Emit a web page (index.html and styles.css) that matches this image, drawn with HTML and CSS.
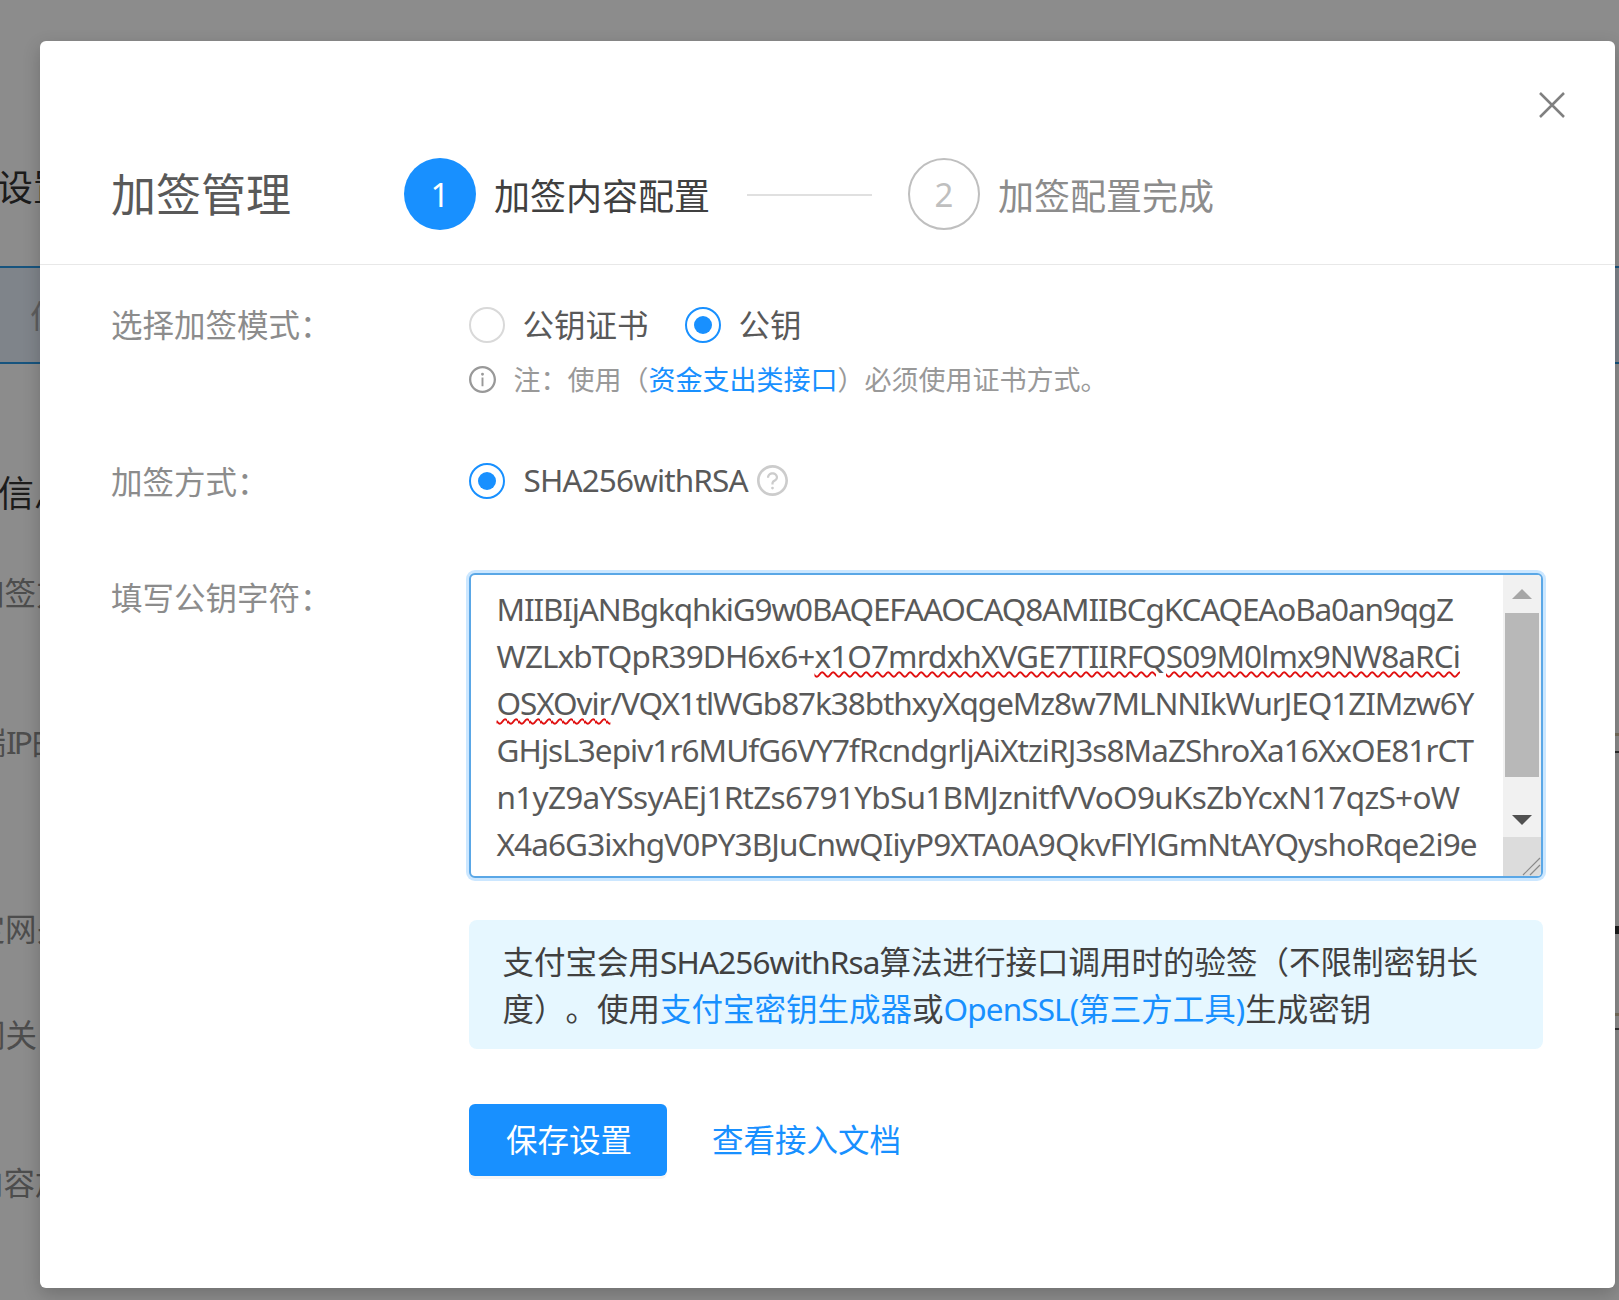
FILE: index.html
```html
<!DOCTYPE html>
<html lang="zh-CN">
<head>
<meta charset="utf-8">
<title>加签管理</title>
<link rel="stylesheet" href="styles.css">
</head>
<body>
<div class="page">
  <div class="bg-row bg-heading bg-r1"><span class="off-a">设置</span></div>
  <div class="bg-band"><span class="band-tab">位</span><span class="band-end"></span></div>
  <div class="bg-row bg-heading bg-r2"><span class="off-b">信息</span></div>
  <div class="bg-row bg-r3"><span class="off-c">加签方式</span></div>
  <div class="bg-row bg-r4"><span class="off-d">端<span class="ip">IP</span>白名单</span><i class="mark mark-a"></i></div>
  <div class="bg-row bg-r5"><span class="off-e">绑定网关</span><i class="mark mark-b"></i></div>
  <div class="bg-row bg-r6"><span class="off-f">网关：</span><i class="mark mark-c"></i></div>
  <div class="bg-row bg-r7"><span class="off-g">内容加密</span></div>

  <div class="overlay">
    <div class="modal">
      <button class="close" aria-label="关闭">
        <svg viewBox="0 0 26 26" width="26" height="26"><path d="M1 1L25 25M25 1L1 25" fill="none" stroke="#808080" stroke-width="2.5"/></svg>
      </button>
      <header class="modal-head">
        <h1 class="modal-title">加签管理</h1>
        <div class="step step-on"><span class="step-num">1</span><span class="step-text">加签内容配置</span></div>
        <span class="step-line"></span>
        <div class="step step-off"><span class="step-num">2</span><span class="step-text">加签配置完成</span></div>
      </header>
      <div class="form">
        <div class="label">选择加签模式：</div>
        <div class="control">
          <div class="radios">
            <label class="radio"><i class="dot"></i>公钥证书</label>
            <label class="radio"><i class="dot dot-on"></i>公钥</label>
          </div>
          <p class="note">
            <svg class="note-icon" viewBox="64 64 896 896" width="27" height="27"><path fill="#999" d="M512 64C264.6 64 64 264.6 64 512s200.6 448 448 448 448-200.6 448-448S759.4 64 512 64zm0 820c-205.4 0-372-166.6-372-372s166.6-372 372-372 372 166.6 372 372-166.6 372-372 372z"/><path fill="#999" d="M464 336a48 48 0 1 0 96 0 48 48 0 1 0-96 0zm72 112h-48c-4.400 0-8 3.600-8 8v272c0 4.400 3.600 8 8 8h48c4.400 0 8-3.600 8-8V456c0-4.400-3.600-8-8-8z"/></svg>
            <span>注：使用（<a href="#">资金支出类接口</a>）必须使用证书方式。</span>
          </p>
        </div>

        <div class="label label-2">加签方式：</div>
        <div class="control control-2">
          <div class="radios">
            <label class="radio radio-tight"><i class="dot dot-on"></i><span class="latin">SHA256withRSA</span></label>
            <svg class="help" viewBox="64 64 896 896" width="31" height="31"><path fill="#ccc" d="M512 64C264.6 64 64 264.6 64 512s200.6 448 448 448 448-200.6 448-448S759.4 64 512 64zm0 820c-205.4 0-372-166.6-372-372s166.6-372 372-372 372 166.6 372 372-166.6 372-372 372z"/><path fill="#ccc" d="M623.600 316.700C593.600 290.400 554 276 512 276s-81.600 14.500-111.600 40.700C369.200 344 352 380.700 352 420v7.600c0 4.400 3.600 8 8 8h48c4.400 0 8-3.600 8-8V420c0-44.100 43.100-80 96-80s96 35.900 96 80c0 31.100-22 59.600-56.100 72.700-21.200 8.100-39.200 22.300-52.100 40.900-13.100 19-19.900 41.800-19.900 64.900V620c0 4.400 3.600 8 8 8h48c4.400 0 8-3.600 8-8v-22.700a48.300 48.300 0 0 1 30.900-44.800c59-22.700 97.100-74.700 97.100-132.500.1-39.300-17.100-76-48.300-103.300zM472 732a40 40 0 1 0 80 0 40 40 0 1 0-80 0z"/></svg>
          </div>
        </div>

        <div class="label label-3">填写公钥字符：</div>
        <div class="control control-3">
          <div class="textarea">
            <div class="lines">
              <div class="l1">MIIBIjANBgkqhkiG9w0BAQEFAAOCAQ8AMIIBCgKCAQEAoBa0an9qgZ</div>
              <div class="l2">WZLxbTQpR39DH6x6+<span class="typo">x1O7mrdxhXVGE7TIIRFQS09M0lmx9NW8aRCi</span></div>
              <div class="l3"><span class="typo">OSXOvir</span>/VQX1tlWGb87k38bthxyXqgeMz8w7MLNNIkWurJEQ1ZIMzw6Y</div>
              <div class="l4">GHjsL3epiv1r6MUfG6VY7fRcndgrljAiXtziRJ3s8MaZShroXa16XxOE81rCT</div>
              <div class="l5">n1yZ9aYSsyAEj1RtZs6791YbSu1BMJznitfVVoO9uKsZbYcxN17qzS+oW</div>
              <div class="l6">X4a6G3ixhgV0PY3BJuCnwQIiyP9XTA0A9QkvFlYlGmNtAYQyshoRqe2i9e</div>
            </div>
            <div class="scrollbar">
              <div class="sb-btn"><i class="arrow-up"></i></div>
              <div class="sb-track"><div class="sb-thumb"></div></div>
              <div class="sb-btn"><i class="arrow-down"></i></div>
              <div class="sb-corner">
                <svg viewBox="0 0 20 20" width="20" height="20"><path d="M2 19L19 2M9 19L19 9" fill="none" stroke="#8a8a8a" stroke-width="1.2"/></svg>
              </div>
            </div>
          </div>
          <div class="alert">支付宝会用<span class="latin">SHA256withRsa</span>算法进行接口调用时的验签（不限制密钥长度）。使用<a href="#">支付宝密钥生成器</a>或<a href="#"><span class="latin">OpenSSL(</span>第三方工具)</a>生成密钥</div>
          <div class="actions">
            <button class="btn">保存设置</button>
            <a class="doc-link" href="#">查看接入文档</a>
          </div>
        </div>
      </div>
    </div>
  </div>
</div>
</body>
</html>
```

FILE: styles.css
```css
* { box-sizing: border-box; }
html, body { margin: 0; padding: 0; }
body {
  font-family: "Noto Sans", "Noto Sans CJK SC", sans-serif;
  font-size: 31.5px;
  line-height: 47px;
  color: #595959;
  background: #fff;
  text-spacing-trim: space-all;
}
.page { position: relative; width: 1619px; height: 1300px; overflow: hidden; }
.latin { letter-spacing: -.87px; }

/* page behind the dialog */
.bg-row { display: flex; justify-content: space-between; align-items: flex-start; height: 48px; line-height: 48px; white-space: nowrap; color: #8c8c8c; font-size: 31.5px; }
.bg-heading { color: #333; font-size: 36px; }
.bg-r1 { margin-top: 164px; }
.bg-r2 { margin-top: 106px; }
.bg-r3 { margin-top: 51px; }
.bg-r4 { margin-top: 101px; }
.bg-r5 { margin-top: 139px; }
.bg-r6 { margin-top: 58px; }
.bg-r7 { margin-top: 100px; }
.off-a { margin-left: -3px; }
.off-b { margin-left: -2px; }
.off-c { margin-left: -27px; }
.off-d { margin-left: -25.5px; }
.ip { letter-spacing: -3px; }
.off-e { margin-left: -58px; }
.off-f { margin-left: -26px; }
.off-g { margin-left: -28px; }
.bg-band { margin-top: 54px; height: 98px; display: flex; justify-content: space-between; align-items: center; border-top: 2px solid #2b9ae6; border-bottom: 2px solid #2b9ae6; background: #e8f0fb; color: #aaa; }
.band-tab { margin-left: 30px; }
.mark { display: block; width: 4px; }
.mark-a { height: 20px; margin-top: 15px; border-top: 3px solid #d8c8a8; border-bottom: 2px solid #555; }
.mark-b { height: 8px; margin-top: 21px; background: #333; }
.mark-c { height: 17px; margin-top: 2px; border-top: 3px solid #d8c8a8; border-bottom: 2px solid #555; }

/* dialog */
.overlay { position: absolute; inset: 0; background: rgba(0,0,0,.45); padding: 41px 4px 12px 40px; }
.modal { position: relative; height: 100%; background: #fff; border-radius: 6px; box-shadow: 0 6px 18px rgba(0,0,0,.2); }
.close { position: absolute; top: 51px; right: 50px; width: 26px; height: 26px; padding: 0; border: 0; background: none; }
.close svg { display: block; }

.modal-head { display: flex; align-items: center; height: 223.5px; padding: 117px 0 33px 71px; border-bottom: 1.5px solid #e8e8e8; }
.modal-title { margin: 0 113px 0 0; padding-top: 2px; font-size: 45px; line-height: 60px; font-weight: 400; color: #595959; }
.step { display: flex; align-items: center; }
.step-num { display: flex; align-items: center; justify-content: center; width: 72px; height: 72px; border-radius: 50%; font-size: 33px; font-family: "Noto Sans", sans-serif; }
.step-text { margin-left: 18px; padding-top: 6px; font-size: 36px; line-height: 48px; }
.step-on .step-num { background: #1890ff; color: #fff; }
.step-on .step-text { color: #404040; }
.step-off .step-num { border: 2px solid #bfbfbf; color: #bfbfbf; }
.step-off .step-text { color: #8c8c8c; }
.step-line { width: 125px; height: 2px; margin: 2px 36px 0 37px; background: #e0e0e0; }

.form { display: grid; grid-template-columns: 357.5px 1074px; padding: 36px 0 0 71px; }
.label { color: #8c8c8c; }
.label-2 { margin-top: 58px; }
.label-3 { margin-top: 69px; }
.control-2 { margin-top: 58px; }
.control-3 { margin-top: 68px; }

.radios { display: flex; align-items: center; }
.radio { display: flex; align-items: center; margin-right: 36px; }
.radio-tight { margin-right: 9px; }
.radio-tight .dot { margin-right: 19px; }
.radio-tight .latin { margin-top: -2px; }
.dot { position: relative; display: block; width: 36px; height: 36px; margin: 1px 18px 0 0; border: 2px solid #d9d9d9; border-radius: 50%; background: #fff; }
.dot-on { border-color: #1890ff; }
.dot-on::after { content: ""; position: absolute; inset: 7px; border-radius: 50%; background: #1890ff; }
.help { display: block; }

.note { display: flex; align-items: center; margin: 12px 0 0; font-size: 27px; line-height: 40px; color: #999; }
.note-icon { margin-right: 18px; }
a { color: #1890ff; text-decoration: none; }

.textarea { display: flex; height: 305px; overflow: hidden; border: 2.5px solid #5aa7e6; border-radius: 6px; box-shadow: 0 0 0 3px rgba(24,144,255,.22); background: #fff; }
.lines { flex: 1; min-width: 0; padding: 10.5px 0 0 26px; line-height: 47px; white-space: nowrap; overflow: hidden; }
.l1 { letter-spacing: -1.16px; }
.l2 { letter-spacing: -.91px; }
.l3 { letter-spacing: -1.08px; }
.l4 { letter-spacing: -.945px; }
.l5 { letter-spacing: -.72px; }
.l6 { letter-spacing: -.89px; }
.typo { text-decoration: underline wavy #e01010 1.5px; text-underline-offset: 3px; }
.scrollbar { display: flex; flex-direction: column; width: 38px; background: #f1f1f1; }
.sb-btn { display: flex; align-items: center; justify-content: center; height: 38px; flex: none; }
.sb-track { flex: 1; padding: 0 2px; }
.sb-thumb { height: 164px; background: #b8b8b8; }
.arrow-up { width: 0; height: 0; border: 10px solid transparent; border-top: 0; border-bottom: 10px solid #a6a6a6; }
.arrow-down { width: 0; height: 0; margin-top: 4px; border: 10px solid transparent; border-bottom: 0; border-top: 10px solid #505050; }
.sb-corner { display: flex; align-items: flex-end; justify-content: flex-end; flex: none; height: 39px; background: #dcdcdc; }
.sb-corner svg { display: block; }

.alert { margin-top: 42px; height: 129px; padding: 18px 33px 0 34px; background: #e6f7ff; border-radius: 8px; color: #404040; }
.actions { display: flex; align-items: center; margin-top: 55px; }
.btn { width: 198px; height: 72px; padding: 0 0 0 3px; border: 0; border-radius: 6px; background: #1890ff; box-shadow: 0 3px 0 rgba(0,0,0,.035); color: #fff; font: inherit; }
.doc-link { margin-left: 45.5px; }
```
